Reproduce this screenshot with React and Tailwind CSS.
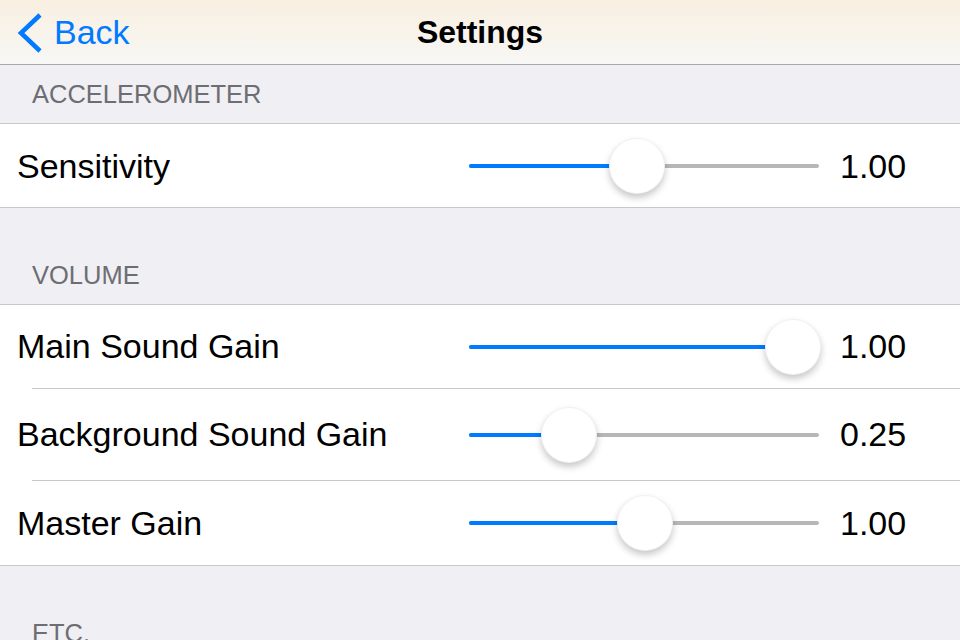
import React from "react";

const font = { fontFamily: '"Liberation Sans", Arial, sans-serif' };

const Slider = ({ pos }) => (
  <div className="relative h-[56px] w-[350px]">
    <div className="absolute left-0 right-0 top-[26px] h-[4px] rounded-full bg-[#b7b7b7]" />
    <div
      className="absolute left-0 top-[26px] h-[4px] rounded-full bg-[#007aff]"
      style={{ width: pos }}
    />
    <div
      className="absolute top-0 h-[56px] w-[56px] -ml-[28px] rounded-full bg-white border border-black/5 shadow-[0_4px_7px_rgba(0,0,0,0.22)]"
      style={{ left: pos }}
    />
  </div>
);

const Row = ({ label, pos, value, height, last }) => (
  <div className={`flex bg-white ${height}`}>
    <div className={`flex flex-1 items-center ${last ? "" : "border-b border-[#c8c7cc] ml-[32px]"}`}>
      <div className={`flex-1 text-[34px] text-black ${last ? "pl-[17px]" : "-ml-[15px]"}`}>{label}</div>
      <Slider pos={pos} />
      <div className="ml-[21px] w-[120px] text-[34px] text-black">{value}</div>
    </div>
  </div>
);

const Header = ({ title, height }) => (
  <div className={`flex items-end bg-[#efeff4] border-b border-[#c8c7cc] pl-[32px] pb-[14px] ${height}`}>
    <span className="text-[25.5px] leading-[30px] text-[#6d6d72]">{title}</span>
  </div>
);

export default function App() {
  return (
    <div className="h-[640px] w-[960px] overflow-hidden bg-[#efeff4]" style={font}>
      <div className="relative flex h-[65px] items-center border-b border-[#a7a7aa] bg-gradient-to-b from-[#f9efe1] to-[#f7f7f5]">
        <div className="flex items-center pl-[16px] text-[#007aff]">
          <svg width="28" height="42" viewBox="0 0 28 42" className="mt-[1px]">
            <polyline points="24,3 5,21 24,39" fill="none" stroke="#007aff" strokeWidth="4.5" strokeLinecap="butt" strokeLinejoin="miter" />
          </svg>
          <span className="ml-[10px] text-[34px] leading-none">Back</span>
        </div>
        <div className="absolute left-0 right-0 text-center text-[32px] font-bold leading-none text-black">
          Settings
        </div>
      </div>

      <Header title="ACCELEROMETER" height="h-[59px]" />
      <Row label="Sensitivity" pos={168} value="1.00" height="h-[84px]" last />
      <div className="border-t border-[#c8c7cc] -mt-[1px]" />
      <Header title="VOLUME" height="h-[97px]" />
      <Row label="Main Sound Gain" pos={324} value="1.00" height="h-[84px]" />
      <Row label="Background Sound Gain" pos={100} value="0.25" height="h-[92px]" />
      <Row label="Master Gain" pos={176} value="1.00" height="h-[84px]" last />
      <div className="border-t border-[#c8c7cc]" />
      <div className="bg-[#efeff4] pl-[32px] pt-[52px]">
        <span className="text-[25.5px] leading-[30px] text-[#6d6d72]">ETC.</span>
      </div>
    </div>
  );
}
